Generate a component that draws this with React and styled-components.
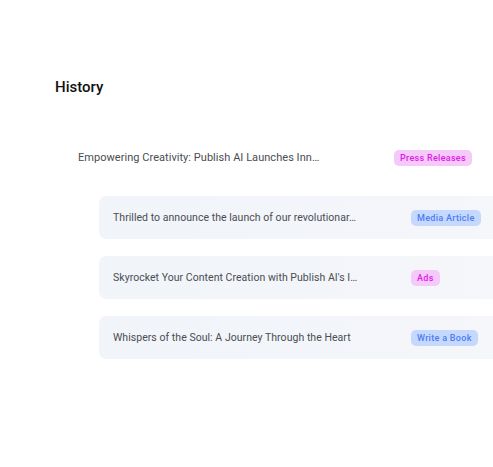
import React from "react";
import styled, { createGlobalStyle } from "styled-components";

const GlobalStyle = createGlobalStyle`
  body {
    margin: 0;
    background: #ffffff;
    font-family: Roboto, "Noto Sans", sans-serif;
    overflow: hidden;
  }
`;

const Page = styled.div`
  width: 493px;
  height: 467px;
  padding: 77px 0 0 55px;
  box-sizing: border-box;
  overflow: hidden;
`;

const Title = styled.div`
  font-size: 15px;
  font-weight: 500;
  color: #111;
  letter-spacing: 0;
  line-height: 20px;
`;

const List = styled.div`
  margin-top: 39px;
  display: flex;
  flex-direction: column;
  gap: 17px;
`;

const Row = styled.div`
  display: flex;
  align-items: center;
  height: 43px;
  box-sizing: border-box;
  margin-left: ${({ $indent }) => $indent}px;
  padding-left: 14px;
  border-radius: 7px;
  width: ${({ $card }) => ($card ? "460px" : "auto")};
  background: ${({ $card }) =>
    $card ? "linear-gradient(90deg, #f1f4f9 0%, #f4f6fa 80%, #fafbfd 100%)" : "transparent"};
`;

const RowText = styled.div`
  width: ${({ $width }) => $width}px;
  flex-shrink: 0;
  padding-right: 20px;
  box-sizing: border-box;
  font-size: ${({ $size }) => $size}px;
  color: #4a4d52;
  letter-spacing: 0.04px;
  white-space: nowrap;
  overflow: hidden;
  text-overflow: ellipsis;
`;

const Badge = styled.span`
  display: inline-flex;
  align-items: center;
  height: 16px;
  padding: 0 6px;
  border-radius: 5px;
  font-size: 9px;
  font-weight: 500;
  letter-spacing: 0.3px;
  background: ${({ $tone }) => ($tone === "pink" ? "#f5c9f9" : "#c6d8fd")};
  color: ${({ $tone }) => ($tone === "pink" ? "#e01ce9" : "#4a7ef5")};
`;

const items = [
  { text: "Empowering Creativity: Publish AI Launches Inn…", tag: "Press Releases", tone: "pink", card: false, indent: 9, width: 316, size: 11 },
  { text: "Thrilled to announce the launch of our revolutionar…", tag: "Media Article", tone: "blue", card: true, indent: 44, width: 298, size: 10.5 },
  { text: "Skyrocket Your Content Creation with Publish AI's I…", tag: "Ads", tone: "pink", card: true, indent: 44, width: 298, size: 10.5 },
  { text: "Whispers of the Soul: A Journey Through the Heart", tag: "Write a Book", tone: "blue", card: true, indent: 44, width: 298, size: 10.5 },
];

export default function App() {
  return (
    <>
      <GlobalStyle />
      <Page>
        <Title>History</Title>
        <List>
          {items.map((item) => (
            <Row key={item.tag} $card={item.card} $indent={item.indent}>
              <RowText $width={item.width} $size={item.size}>
                {item.text}
              </RowText>
              <Badge $tone={item.tone}>{item.tag}</Badge>
            </Row>
          ))}
        </List>
      </Page>
    </>
  );
}
